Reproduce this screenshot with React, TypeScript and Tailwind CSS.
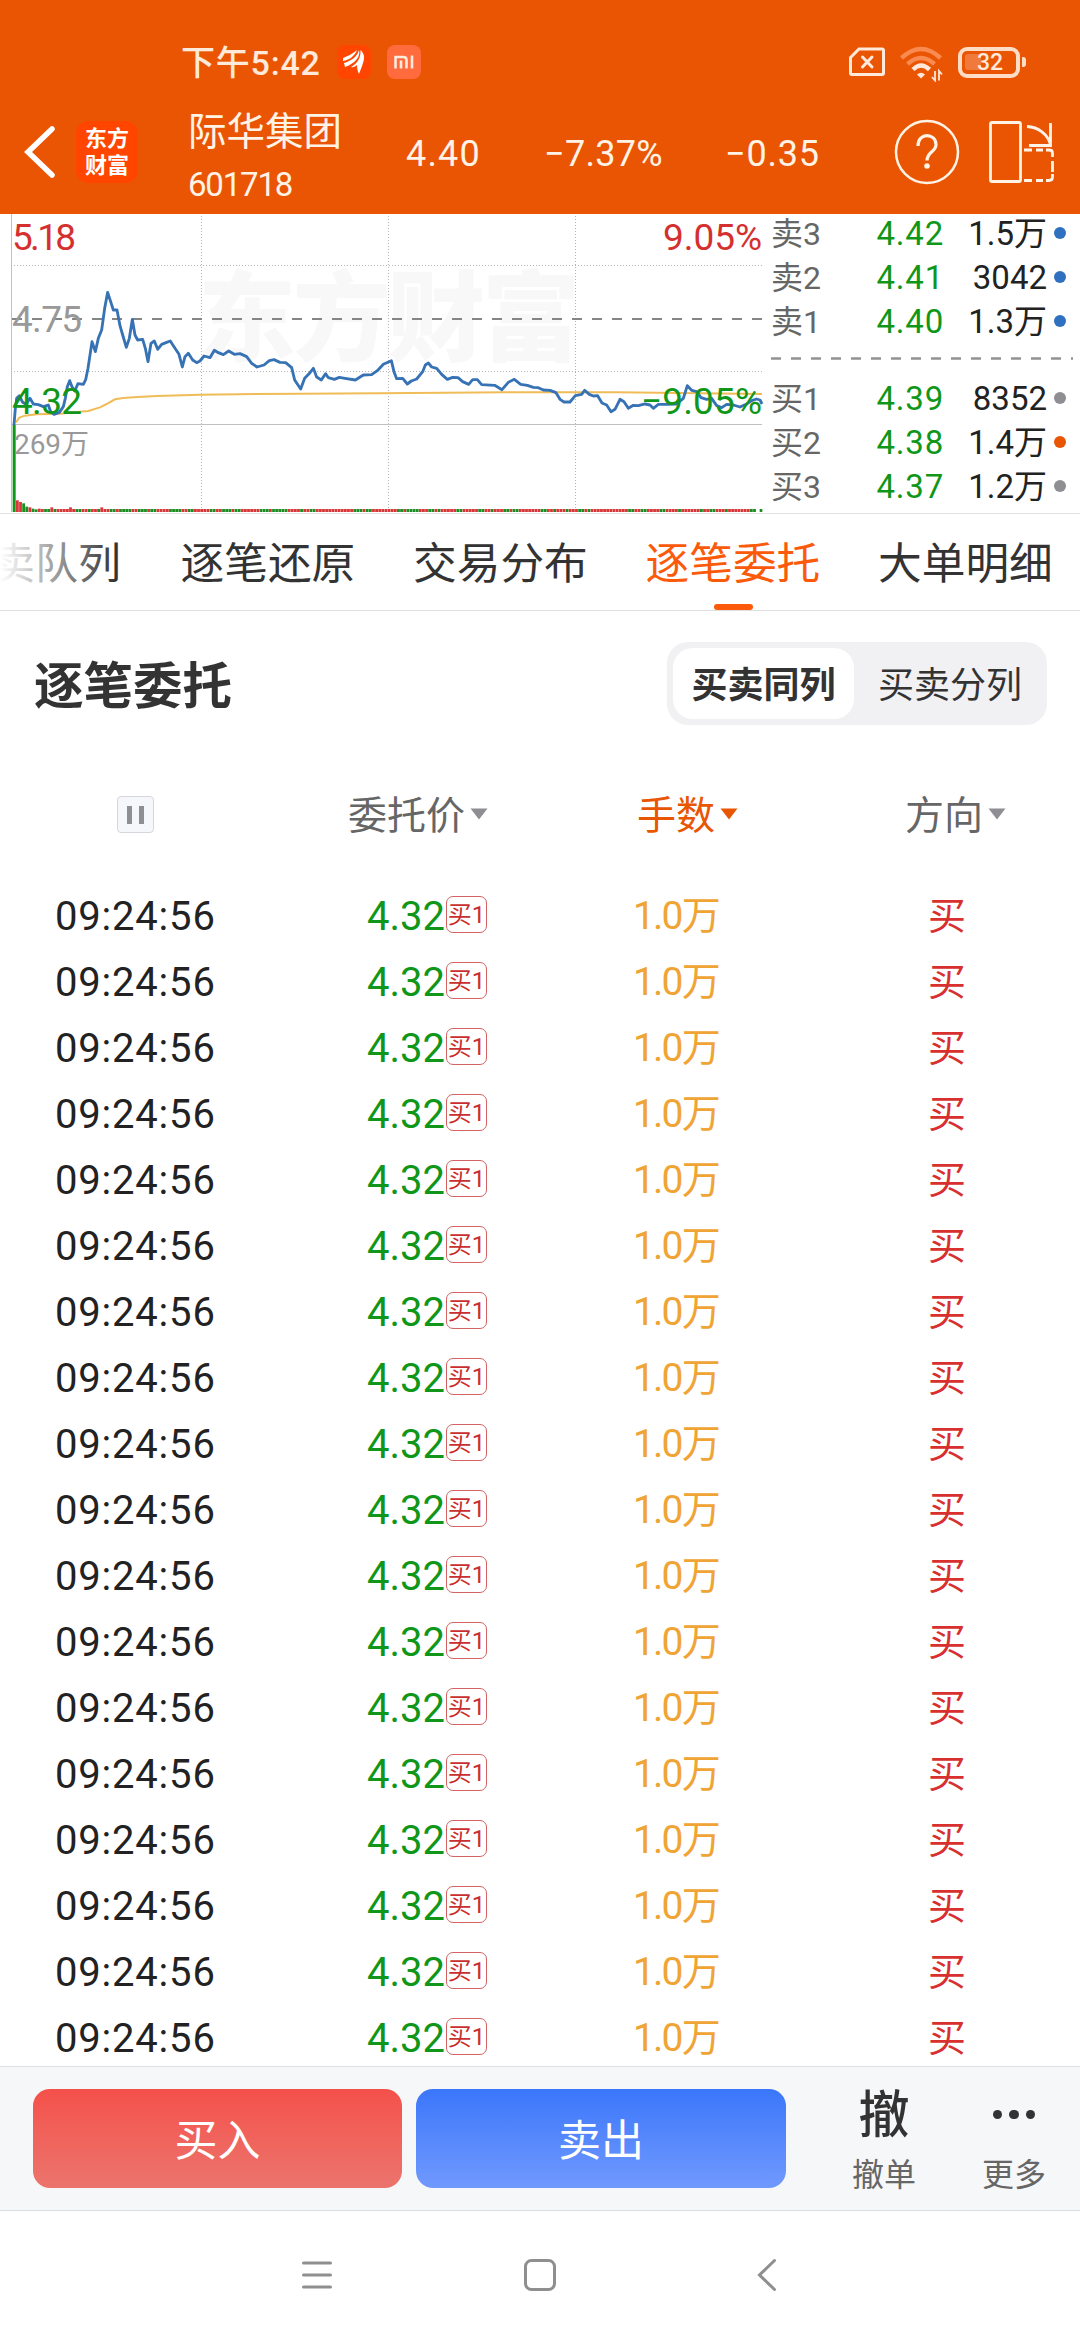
import React from "react";

type Side = "sell" | "buy";

interface QuoteLevel {
  side: Side;
  label: string;
  price: string;
  volume: string;
  dotClass: string;
}

interface OrderRow {
  time: string;
  price: string;
  level: string;
  lots: string;
  direction: string;
}

const levels: QuoteLevel[] = [
  { side: "sell", label: "卖3", price: "4.42", volume: "1.5万", dotClass: "bg-[#3070c0]" },
  { side: "sell", label: "卖2", price: "4.41", volume: "3042", dotClass: "bg-[#3070c0]" },
  { side: "sell", label: "卖1", price: "4.40", volume: "1.3万", dotClass: "bg-[#3070c0]" },
  { side: "buy", label: "买1", price: "4.39", volume: "8352", dotClass: "bg-[#8e8e93]" },
  { side: "buy", label: "买2", price: "4.38", volume: "1.4万", dotClass: "bg-[#ea5504]" },
  { side: "buy", label: "买3", price: "4.37", volume: "1.2万", dotClass: "bg-[#8e8e93]" },
];

const tabs = ["逐笔还原", "交易分布", "逐笔委托", "大单明细"];
const activeTab = "逐笔委托";

const orders: OrderRow[] = Array.from({ length: 18 }, () => ({
  time: "09:24:56",
  price: "4.32",
  level: "买1",
  lots: "1.0万",
  direction: "买",
}));

// Chart series are stored at 3x resolution and scaled down when drawn
const pricePoints =
  "42,660 46,610 50,580 58,572 68,592 78,598 90,580 100,597 115,599 130,605 145,600 152,620 162,628 178,622 190,605 196,580 202,545 209,527 216,545 224,558 234,536 250,538 257,524 264,490 276,410 286,440 295,400 305,375 314,310 323,262 332,290 340,315 351,315 360,362 368,390 379,427 388,400 397,343 405,390 413,405 428,403 436,430 444,470 453,415 463,408 473,433 485,418 498,413 511,408 520,422 537,448 547,486 555,455 565,445 578,465 590,473 600,468 612,453 630,458 643,436 655,443 670,449 686,438 703,448 720,446 740,455 755,475 771,486 792,480 808,467 822,464 840,472 857,473 875,488 884,525 902,552 914,520 930,503 940,490 950,516 964,525 977,506 985,518 1003,523 1018,517 1035,520 1066,525 1090,510 1115,509 1132,497 1150,478 1174,467 1182,500 1190,521 1208,520 1222,537 1234,528 1250,522 1268,500 1276,480 1285,474 1295,486 1310,490 1325,508 1342,523 1358,517 1374,518 1388,530 1406,538 1418,524 1432,524 1445,539 1484,541 1506,554 1525,532 1543,523 1562,538 1582,541 1600,547 1615,548 1630,555 1650,556 1668,563 1680,583 1692,591 1710,591 1726,572 1745,568 1754,556 1768,568 1780,573 1793,572 1806,594 1820,600 1833,620 1845,613 1860,583 1872,590 1885,610 1900,601 1915,602 1935,597 1950,600 1960,610 1975,598 2000,598 2030,597 2050,580 2062,542 2075,556 2090,560 2103,578 2120,583 2135,580 2150,602 2165,608 2180,598 2200,600 2220,606 2240,597 2255,587 2270,582 2280,585 2286,597";

const averagePoints =
  "48,652 58,638 75,632 110,628 180,626 240,620 265,618 300,607 320,597 345,583 370,579 400,577 470,573 600,569 900,566 1140,565 1520,562 1850,562 2286,567";

// Run lengths of the volume bars, starting with a rising (red) run
const volumeRuns = [
  2, 2, 1, 2, 2, 2, 1, 1, 6, 2, 2, 1, 2, 1, 3, 2, 1, 4, 2, 3, 1, 2, 4, 4, 2, 2, 5, 2, 2, 3, 1, 2, 6, 3,
  1, 5, 4, 1, 2, 2, 12, 3, 1, 2, 8, 2, 1, 4, 3, 2, 1, 1, 5, 2, 5, 2, 2, 1, 3, 2, 1, 2, 7, 2, 2, 1, 3, 1,
  3, 2, 1, 1, 12, 2, 2, 2, 4, 2, 4, 1, 6, 1, 2, 2, 3, 1, 7, 2, 5, 1, 9,
];

const volumeHeights = [35, 30, 26, 16, 14, 10, 8, 10];

const buildVolumeBars = () => {
  const bars: { x: number; h: number; up: boolean }[] = [];
  let up = true;
  for (const run of volumeRuns) {
    for (let i = 0; i < run; i++) {
      const n = bars.length;
      if (48 + n * 9.37 > 2265) return bars;
      const bump = n === 11 || n === 17 || n === 27 ? 14 : 9;
      bars.push({ x: 48 + n * 9.37, h: volumeHeights[n] ?? bump, up });
    }
    up = !up;
  }
  return bars;
};

const volumeBars = buildVolumeBars();

const StatusBar: React.FC = () => (
  <div className="flex h-[88px] items-center pt-[38px] pb-[2px] pl-[181px] text-[#ffe9da]">
    <span className="w-[156px] pt-[2px] text-[34px] leading-[40px] font-medium tracking-[.8px]">下午5:42</span>
    <span className="flex size-[34px] items-center justify-center rounded-[8px] bg-[#ff4500]">
      <svg width="24" height="26" viewBox="0 0 24 26" fill="#fff">
        <path d="M1 9C6 7 12 4 15 1C13 7 7 11 1 12Z" />
        <path d="M2 14C9 12 15 8 17 1C19 8 12 15 3 18Z" />
        <path d="M9 18C16 14 19 8 18.500 1C23 5 22.500 10 21 14C19.500 19 18 22 17 25C15.500 22 15 19 15 16C13.500 17.500 11 19 9 18Z" />
      </svg>
    </span>
    <span className="ml-4 flex size-[34px] items-center justify-center rounded-[8px] bg-[#ff6b3d]">
      <svg width="20" height="14" viewBox="0 0 20 14" fill="none" stroke="#ffeadd" strokeWidth="2.600">
        <path d="M1.500 13.500V2H9.500Q12.500 2 12.500 5V13.500M7 5.500V13.500M18 .500V13.500" />
      </svg>
    </span>
    <svg className="ml-[428px]" width="36" height="30" viewBox="0 0 36 30" fill="none" stroke="currentColor" strokeWidth="3">
      <path d="M10 2H33Q34.500 2 34.500 3.500V26Q34.500 27.500 33 27.500H3Q1.500 27.500 1.500 26V10.500Z" />
      <path d="M13.500 10L23 20M23 10L13.500 20" strokeLinecap="round" />
    </svg>
    <svg className="mt-[3px] ml-[15px]" width="43" height="36" viewBox="0 0 43 36" fill="none" strokeWidth="4.500">
      <path d="M1.500 12Q21 -6 40.500 12" stroke="#f98a50" />
      <path d="M7.500 18Q21 6 34.500 18" stroke="#f98a50" />
      <path d="M13 23.500Q21 15.500 29.500 23.500" stroke="#ffe9da" />
      <path d="M17 28.500L21 32.500L25 28.500Q21 25 17 28.500Z" fill="#ffe9da" />
      <path d="M35 25V34.500L32 31M39 34.500V25L42 28.500" stroke="#ffe9da" strokeWidth="1.800" />
    </svg>
    <div className="ml-[15px] flex h-[31px] w-[62px] items-center rounded-[9px] border-4 border-[#ffdcc5] pl-[3px]">
      <span className="h-4 w-4 rounded-l-[3px] bg-[#f07a3c]" />
      <span className="-ml-[4px] pt-px text-[23px] leading-[22px] font-medium">32</span>
    </div>
    <span className="ml-[2px] h-[10px] w-[4px] rounded-r-[3px] bg-[#ffdcc5]" />
  </div>
);

const TitleBar: React.FC = () => (
  <div className="flex h-[126px] items-center pt-[2px] text-[#fff3e6]">
    <svg className="ml-[24px]" width="32" height="52" viewBox="0 0 32 52" fill="none" stroke="#fff" strokeWidth="5.500" strokeLinecap="round">
      <path d="M28 3L4 26L28 49" />
    </svg>
    <div className="ml-[20px] flex size-[62px] flex-col items-center justify-center rounded-[13px] bg-[#ff4500] text-[22px] leading-[27px] font-bold text-white">
      <span>东方</span>
      <span>财富</span>
    </div>
    <div className="ml-[50px] w-[218px] pt-[11px]">
      <div className="pt-[2px] text-[38.500px] leading-[52px]">际华集团</div>
      <div className="pt-px text-[33px] leading-[52px] tracking-[-1.200px]">601718</div>
    </div>
    <span className="w-[138px] pt-[4px] text-[36px] tracking-[1.200px]">4.40</span>
    <span className="w-[181px] pt-[4px] text-[36px] tracking-[.3px]">−7.37%</span>
    <span className="w-[169px] pt-[4px] text-[36px] tracking-[.8px]">−0.35</span>
    <svg width="66" height="66" viewBox="0 0 66 66" fill="none" stroke="currentColor" strokeWidth="2.500">
      <circle cx="33" cy="33" r="31" />
      <path d="M24 27C24 13 42 14 42 25.500C42 33 33 32.500 33 41.500" strokeWidth="3.200" />
      <circle cx="33" cy="47" r="2.800" fill="currentColor" stroke="none" />
    </svg>
    <svg className="ml-[28px]" width="68" height="66" viewBox="0 0 68 66" fill="none" stroke="currentColor" strokeWidth="2.800">
      <rect x="2.500" y="3.500" width="30" height="59" rx="1.500" />
      <path d="M39 7.500C50 8 60 15 62.500 26M62.500 4V26.500H41" />
      <path d="M36 31H44M48 31H55M58 31H61Q64.500 31 64.500 34V38M64.500 42V53M64.500 55V58Q64.500 61.500 61 61.500H58M55 61.500H48M44 61.500H36" />
    </svg>
  </div>
);

const MinuteChart: React.FC = () => (
  <svg width="769" height="299" viewBox="0 0 769 299" className="shrink-0">
    <text x="198" y="139" textLength="382" className="text-[98px] font-black" fill="#f8f8f8">
      东方财富
    </text>
    <g fill="none" strokeWidth="1">
      <path
        d="M14 51.500H762M14 157.500H762M201.500 2V296M388.500 2V296M575.500 2V296"
        stroke="#b4b4b4"
        strokeDasharray="1 2"
      />
      <path d="M11.500 0V298M11.500 210.500H762" stroke="#c0c0c0" />
    </g>
    <path d="M12 105H762" stroke="#858585" strokeWidth="2" strokeDasharray="10 10" />
    <g transform="translate(0 -9) scale(.33333)">
      <polyline points={averagePoints} fill="none" stroke="#f0bc58" strokeWidth="6" />
      <polyline points={pricePoints} fill="none" stroke="#3672b4" strokeWidth="8.500" strokeLinejoin="round" />
      <rect x="38" y="660" width="9" height="261" fill="#109618" />
      {volumeBars.map((bar) => (
        <rect
          key={bar.x}
          x={bar.x}
          y={921 - bar.h}
          width="8.400"
          height={bar.h}
          fill={bar.up ? "#d8383a" : "#1d8f22"}
        />
      ))}
      <rect x="2279" y="912" width="8" height="9" fill="#1d8f22" />
    </g>
    <g className="text-[37px]">
      <text x="12" y="36" textLength="64" fill="#d43030">5.18</text>
      <text x="12" y="118" textLength="70" fill="#999">4.75</text>
      <text x="12" y="200" textLength="70" fill="#109618">4.32</text>
      <text x="663" y="36" textLength="99" fill="#d43030">9.05%</text>
      <text x="641" y="200" textLength="121" fill="#109618">−9.05%</text>
    </g>
    <text x="14" y="240" textLength="75" fill="#999" className="text-[28px]">269万</text>
  </svg>
);

const LevelRow: React.FC<{ level: QuoteLevel }> = ({ level }) => (
  <div className="grid h-[44px] grid-cols-[60px_113px_103px_1fr] items-center leading-[44px]">
    <span className="text-[32px] text-[#666]">{level.label}</span>
    <span className="text-right text-[33px] tracking-[.8px] text-[#109618]">{level.price}</span>
    <span className="text-right text-[33px] text-[#222]">{level.volume}</span>
    <span className={`mb-[3px] ml-[7px] size-3 rounded-full ${level.dotClass}`} />
  </div>
);

const OrderBook: React.FC = () => (
  <div className="flex-1 pl-[2px]">
    <div className="-mt-[2px]">
      {levels.filter((l) => l.side === "sell").map((l) => <LevelRow key={l.label} level={l} />)}
    </div>
    <svg className="block" width="305" height="33" viewBox="0 0 305 33">
      <path d="M0 14.500H302" stroke="#919191" strokeWidth="2.500" strokeDasharray="10 10" />
    </svg>
    {levels.filter((l) => l.side === "buy").map((l) => <LevelRow key={l.label} level={l} />)}
  </div>
);

const TabBar: React.FC = () => (
  <div className="relative h-[98px] overflow-hidden border-y border-[#e0e0e0]">
    <div className="-ml-[8px] flex h-full w-max pt-[20px] text-[43.700px] leading-[60px] text-[#333]">
      <div className="w-[188.500px] text-[43px]">卖队列</div>
      {tabs.map((tab) => (
        <div key={tab} className={`relative w-[232.500px] ${tab === activeTab ? "text-[#fa5a0a]" : ""}`}>
          {tab}
          {tab === activeTab && (
            <span className="absolute bottom-0 left-[68px] h-[6px] w-[39px] rounded-full bg-[#fa5a0a]" />
          )}
        </div>
      ))}
    </div>
    <div className="absolute inset-y-0 left-0 w-[116px] bg-gradient-to-r from-white to-white/0" />
  </div>
);

const SectionHeader: React.FC = () => (
  <div className="flex h-[145px] items-center justify-between pr-[33px] pl-[34px]">
    <h2 className="pt-[6px] text-[49.500px] leading-[60px] font-bold text-[#333]">逐笔委托</h2>
    <div className="flex h-[83px] w-[380px] rounded-[21px] bg-[#f1f1f4] p-[6px] text-[36px] leading-[76px] text-[#333]">
      <span className="h-[71px] w-[181px] rounded-[20px] bg-white text-center font-bold">买卖同列</span>
      <span className="flex-1 pl-[5px] text-center">买卖分列</span>
    </div>
  </div>
);

const SortArrow: React.FC = () => (
  <svg width="18" height="12" viewBox="0 0 18 12" className="mb-[5px] ml-[5px]">
    <path d="M.500 .500H17.500L9 11.500Z" fill="currentColor" />
  </svg>
);

const rowGrid = "grid grid-cols-[367px_266px_295px_1fr] items-center";

const OrderTable: React.FC = () => (
  <div className="h-[1310px] overflow-hidden">
    <div className="grid h-[127px] grid-cols-[348px_289px_268px_1fr] items-center pb-[6px] text-[39px] text-[#666]">
      <span className="mb-[4px] ml-[117px] flex size-[37px] items-center justify-center gap-[7px] rounded-[4px] border border-[#d5d7dc] bg-[#f6f7fa]">
        <i className="h-[18px] w-[5px] bg-[#8e8e93]" />
        <i className="h-[18px] w-[5px] bg-[#8e8e93]" />
      </span>
      <span className="flex items-center">
        委托价
        <span className="text-[#8e8e93]"><SortArrow /></span>
      </span>
      <span className="flex items-center text-[#e85604]">
        手数
        <SortArrow />
      </span>
      <span className="flex items-center">
        方向
        <span className="text-[#8e8e93]"><SortArrow /></span>
      </span>
    </div>
    {orders.map((order, index) => (
      <div key={index} className={`${rowGrid} h-[66px] leading-[67px]`}>
        <span className="pl-[55px] text-[40px] tracking-[.8px] text-[#222]">{order.time}</span>
        <span className="flex items-center text-[40px] text-[#109618]">
          <span className="w-[79px]">{order.price}</span>
          <span className="mb-[4px] flex h-[37px] w-[41px] items-center justify-center rounded-[7px] border border-[#d46262] text-[24px] leading-none text-[#c92f2f]">
            {order.level}
          </span>
        </span>
        <span className="text-[39px] tracking-[-1.800px] text-[#efa435]">{order.lots}</span>
        <span className="text-[38px] text-[#d82f2f]">{order.direction}</span>
      </div>
    ))}
  </div>
);

const TradeBar: React.FC = () => (
  <div className="flex h-[145px] border-y border-[#dcdee0] bg-[#f6f7f9] pt-[22px] pl-[33px]">
    <button className="h-[99px] w-[369px] rounded-[17px] bg-gradient-to-b from-[#f4504a] to-[#eb746d] pt-[5px] text-[43px] text-white">
      买入
    </button>
    <button className="ml-[14px] h-[99px] w-[370px] rounded-[17px] bg-gradient-to-b from-[#3b76fa] to-[#7099fe] pt-[5px] text-[43px] text-white">
      卖出
    </button>
    <div className="ml-[33px] flex w-[130px] flex-col items-center">
      <span className="pt-px text-[51px] leading-[52px] font-medium text-[#333]">撤</span>
      <span className="pt-[13px] text-[32px] leading-[40px] text-[#666]">撤单</span>
    </div>
    <div className="flex w-[130px] flex-col items-center">
      <span className="flex h-[53px] items-center gap-[7px] pb-[2px]">
        <i className="size-[9.500px] rounded-full bg-[#333]" />
        <i className="size-[9.500px] rounded-full bg-[#333]" />
        <i className="size-[9.500px] rounded-full bg-[#333]" />
      </span>
      <span className="pt-[13px] text-[32px] leading-[40px] text-[#666]">更多</span>
    </div>
  </div>
);

const NavBar: React.FC = () => (
  <div className="flex h-[129px] items-center bg-white pb-[2px] text-[#8f8f8f]">
    <svg className="ml-[301px]" width="32" height="34" viewBox="0 0 32 34" stroke="currentColor" strokeWidth="3" strokeLinecap="round">
      <path d="M2.500 5H29.500M2.500 17H29.500M2.500 29H29.500" />
    </svg>
    <svg className="ml-[190px]" width="34" height="34" viewBox="0 0 34 34" fill="none" stroke="currentColor" strokeWidth="3">
      <rect x="2.500" y="2.500" width="29" height="29" rx="6" />
    </svg>
    <svg className="ml-[200px]" width="20" height="34" viewBox="0 0 20 34" fill="none" stroke="currentColor" strokeWidth="3" strokeLinecap="round">
      <path d="M17.500 2.500L2.500 17L17.500 31.500" />
    </svg>
  </div>
);

const App: React.FC = () => (
  <div className="flex h-[2340px] w-[1080px] flex-col overflow-hidden bg-white font-[Roboto,'Noto_Sans_CJK_SC',sans-serif]">
    <header className="h-[214px] bg-[#ea5504]">
      <StatusBar />
      <TitleBar />
    </header>
    <div className="flex h-[299px]">
      <MinuteChart />
      <OrderBook />
    </div>
    <TabBar />
    <SectionHeader />
    <OrderTable />
    <TradeBar />
    <NavBar />
  </div>
);

export default App;
